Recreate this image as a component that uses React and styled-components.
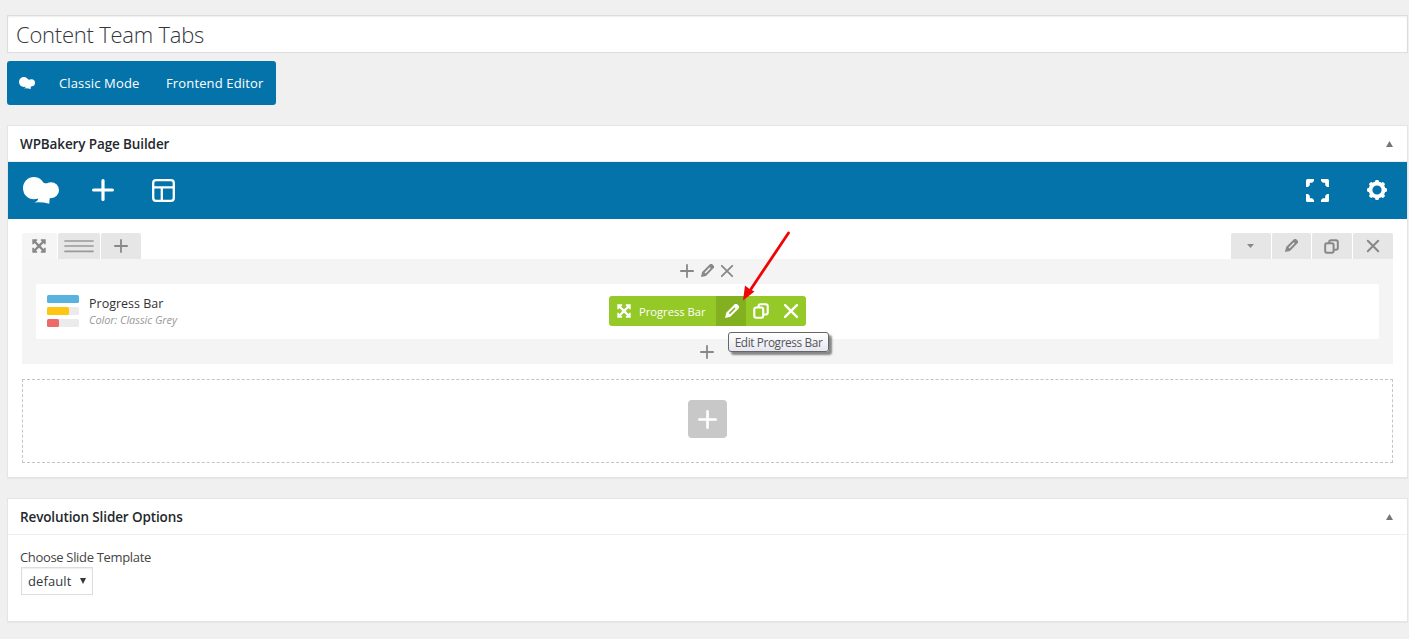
import React from "react";
import styled, { createGlobalStyle } from "styled-components";

const GlobalStyle = createGlobalStyle`
  * { box-sizing: border-box; }
  body {
    margin: 0;
    background: #f0f0f0;
    font-family: "Open Sans", "Noto Sans", sans-serif;
    font-size: 13px;
    color: #444;
  }
  svg { display: block; flex: none; }
`;

const Page = styled.main`
  display: flex;
  flex-direction: column;
  align-items: stretch;
  height: 639px;
  padding: 15px 1px 0 7px;
  overflow: hidden;
`;

const TitleField = styled.div`
  height: 38px;
  padding: 0 8px;
  border: 1px solid #ddd;
  background: #fff;
  box-shadow: inset 0 1px 2px rgba(0, 0, 0, 0.07);
  font-size: 22px;
  font-weight: 330;
  line-height: 37px;
  letter-spacing: -0.23px;
  color: #32373c;
`;

const ModeSwitch = styled.nav`
  display: flex;
  align-items: center;
  align-self: flex-start;
  width: 269px;
  height: 44px;
  margin-top: 8px;
  padding-left: 12px;
  border-radius: 3px;
  background: #0473aa;
  color: #fff;
`;

const ModeLink = styled.a`
  margin-left: ${(p) => p.$gap}px;
  width: ${(p) => p.$width}px;
  white-space: nowrap;
  font-size: 13px;
  line-height: 20px;
  letter-spacing: 0.14px;
`;

const Panel = styled.section`
  display: flex;
  flex-direction: column;
  height: ${(p) => p.$height}px;
  margin-top: 20px;
  border: 1px solid #e5e5e5;
  background: #fff;
  box-shadow: 0 1px 1px rgba(0, 0, 0, 0.04);
`;

const PanelHeader = styled.header`
  display: flex;
  align-items: center;
  justify-content: space-between;
  height: 36px;
  flex: none;
  padding: 0 14px 0 12px;
  border-bottom: 1px solid #eee;
`;

const PanelTitle = styled.h2`
  margin: 0;
  font-size: 13.5px;
  font-weight: 600;
  line-height: 20px;
  letter-spacing: -0.12px;
  color: #23282d;
`;

const Navbar = styled.div`
  display: flex;
  align-items: center;
  height: 57px;
  flex: none;
  padding: 0 20px 1px 15px;
  background: #0473aa;
  color: #fff;
`;

const NavItem = styled.div`
  display: flex;
  margin-left: ${(p) => p.$gap}px;
`;

const Spacer = styled.div`
  flex: 1;
`;

const Canvas = styled.div`
  display: flex;
  flex-direction: column;
  padding: 14px 14px 0;
`;

const RowControls = styled.div`
  display: flex;
  gap: 1px;
  height: 26px;
  color: #888;
`;

const RowTab = styled.div`
  display: flex;
  align-items: center;
  justify-content: center;
  width: ${(p) => p.$width}px;
  padding-right: 1px;
  border-radius: 2px 2px 0 0;
  background: ${(p) => (p.$plain ? "#f5f5f5" : "#e6e6e6")};
`;

const RowBody = styled.div`
  display: flex;
  flex-direction: column;
  height: 105px;
  padding: 0 14px;
  background: #f4f4f4;
  color: #888;
`;

const ColumnControls = styled.div`
  display: flex;
  align-items: center;
  justify-content: center;
  gap: 6px;
  height: 25px;
  padding: 0 1px ${(p) => p.$lift || 0}px 0;
`;

const ElementCard = styled.article`
  display: grid;
  grid-template-columns: 1fr auto 1fr;
  align-items: center;
  height: 55px;
  padding: 0 11px 1px;
  border-radius: 2px;
  background: #fff;
`;

const ElementInfo = styled.div`
  display: flex;
  align-items: center;
  gap: 10px;
`;

const ElementName = styled.h4`
  margin: 0;
  font-size: 12.5px;
  font-weight: 400;
  line-height: 17px;
  color: #333;
`;

const ElementMeta = styled.div`
  font-size: 11px;
  font-style: italic;
  line-height: 15px;
  letter-spacing: -0.08px;
  color: #999;
`;

const ElementToolbar = styled.div`
  display: flex;
  position: relative;
  width: 197px;
  height: 30px;
  border-radius: 3px;
  background: #95c927;
  color: #fff;
`;

const ToolbarLabel = styled.div`
  display: flex;
  align-items: center;
  gap: 8px;
  width: 107px;
  padding-left: 8px;
  font-size: 11.2px;
  white-space: nowrap;
`;

const ToolbarButton = styled.div`
  display: flex;
  align-items: center;
  justify-content: center;
  width: 30px;
  background: ${(p) => (p.$active ? "#82b01f" : "transparent")};
`;

const Tooltip = styled.div`
  position: absolute;
  z-index: 2;
  left: 119px;
  top: 36px;
  width: 101px;
  height: 20px;
  border: 1px solid #666;
  border-radius: 3px;
  background: linear-gradient(#fff, #e6e7f1);
  box-shadow: 3px 3px 2px rgba(0, 0, 0, 0.45);
  font-size: 11.8px;
  line-height: 18px;
  letter-spacing: -0.38px;
  text-align: center;
  white-space: nowrap;
  color: #555;
`;

const PointerArrow = styled.svg`
  position: absolute;
  z-index: 3;
  left: 131px;
  top: -67px;
  overflow: visible;
`;

const EmptyRow = styled.div`
  display: flex;
  align-items: center;
  justify-content: center;
  height: 84px;
  margin-top: 15px;
  padding-bottom: 4px;
  border: 1px dashed #c4c4c4;
`;

const AddButton = styled.div`
  display: flex;
  align-items: center;
  justify-content: center;
  width: 39px;
  height: 38px;
  border-radius: 4px;
  background: #c8c8c8;
  color: #fff;
`;

const OptionBody = styled.div`
  padding: 12px 12px;
`;

const OptionLabel = styled.div`
  font-size: 13px;
  line-height: 20px;
  letter-spacing: -0.33px;
`;

const SelectBox = styled.div`
  display: flex;
  align-items: center;
  justify-content: space-between;
  width: 72px;
  height: 28px;
  margin-left: 1px;
  padding: 0 6px;
  border: 1px solid #ddd;
  box-shadow: inset 0 1px 2px rgba(0, 0, 0, 0.07);
  font-size: 13px;
  letter-spacing: 0.1px;
  color: #32373c;
`;

const Logo = ({ width }) => (
  <svg width={width} height={width * 0.75} viewBox="0 0 36 27" fill="currentColor">
    <ellipse cx="10.9" cy="11.2" rx="10.9" ry="11.1" />
    <circle cx="28" cy="13.2" r="8" />
    <path d="M17 3.500Q20 6.200 24 6.400L27 20.500Q26.400 22 26.300 26.800Q18 24.800 11.500 25.600Q15 23.800 15.500 21.500L10 20Z" />
  </svg>
);

const Plus = ({ size, weight }) => (
  <svg width={size} height={size} viewBox={`0 0 ${size} ${size}`} stroke="currentColor" strokeWidth={weight} strokeLinecap="round">
    <path d={`M${size / 2} ${weight / 2}V${size - weight / 2}M${weight / 2} ${size / 2}H${size - weight / 2}`} />
  </svg>
);

const Cross = ({ size, weight }) => (
  <svg width={size} height={size} viewBox="0 0 14 14" stroke="currentColor" strokeWidth={weight} strokeLinecap="round">
    <path d="M1.800 1.800L12.200 12.200M12.200 1.800L1.800 12.200" />
  </svg>
);

const Pencil = ({ size = 14 }) => (
  <svg width={size} height={size} viewBox="0 0 14 14">
    <g transform="rotate(45 7 7)" fill="currentColor" fillRule="evenodd">
      <path d="M4.300 0.200Q4.300 -1.500 6 -1.500H8Q9.700 -1.500 9.700 0.200V11.200L7 15.500L4.300 11.200ZM6.300 2.400V9.800H7.700V2.400Z" />
    </g>
  </svg>
);

const Copy = ({ size = 15 }) => (
  <svg width={size} height={size} viewBox="0 0 15 15" fill="none" stroke="currentColor" strokeWidth="2">
    <rect x="1.200" y="4.200" width="8.400" height="9.600" rx="1.800" />
    <path d="M5.200 4.200V3Q5.200 1.200 7 1.200H12Q13.800 1.200 13.800 3V9Q13.800 10.800 12 10.800H9.800" />
  </svg>
);

const Move = () => (
  <svg width="14" height="14" viewBox="0 0 14 14" fill="currentColor">
    <path d="M0.300 0.300H5.200V1.600L4.100 2.500L7 5.300L9.900 2.500L8.800 1.600V0.300H13.700V5.200H12.400L11.500 4.100L8.700 7L11.500 9.900L12.400 8.800H13.700V13.700H8.800V12.400L9.900 11.500L7 8.700L4.100 11.500L5.200 12.400V13.700H0.300V8.800H1.600L2.500 9.900L5.300 7L2.500 4.100L1.600 5.200H0.300Z" />
  </svg>
);

const Layout = () => (
  <svg width="23" height="23" viewBox="0 0 23 23" fill="none" stroke="currentColor" strokeWidth="2.300">
    <rect x="1.200" y="1.200" width="20.600" height="20.600" rx="2.800" />
    <path d="M1.500 8.300H21.500M9.800 8.300V21.500" />
  </svg>
);

const Fullscreen = () => (
  <svg width="23" height="23" viewBox="0 0 23 23" fill="currentColor">
    {[0, 90, 180, 270].map((angle) => (
      <path key={angle} transform={`rotate(${angle} 11.500 11.500)`} d="M0 1.500Q0 0 1.500 0H8V2L6.200 3.800H3.800V6.200L2 8H0Z" />
    ))}
  </svg>
);

const Gear = () => (
  <svg width="20" height="20" viewBox="0 0 20 20" fill="currentColor">
    <circle cx="10" cy="10" r="6.500" fill="none" stroke="currentColor" strokeWidth="3.800" />
    {[0, 45, 90, 135, 180, 225, 270, 315].map((angle) => (
      <rect key={angle} x="8.100" y="0" width="3.800" height="4" rx="1.300" transform={`rotate(${angle} 10 10)`} />
    ))}
  </svg>
);

const Lines = () => (
  <svg width="30" height="14" viewBox="0 0 30 14" stroke="#999" strokeWidth="1.700" strokeLinecap="round">
    <path d="M1 2H29M1 7H29M1 12.300H29" />
  </svg>
);

const Triangle = ({ down, width, height, color }) => (
  <svg width={width} height={height} viewBox="0 0 8 6" preserveAspectRatio="none" fill={color}>
    <path d={down ? "M0 0H8L4 6Z" : "M4 0L8 6H0Z"} />
  </svg>
);

const ProgressIcon = () => (
  <svg width="32" height="32" viewBox="0 0 32 32">
    <rect y="0" width="32" height="8" rx="1.500" fill="#58b4df" />
    <rect y="12" width="32" height="8" rx="1.500" fill="#ebebeb" />
    <rect y="12" width="22" height="8" rx="1.500" fill="#fdc60f" />
    <rect y="24" width="32" height="8" rx="1.500" fill="#ebebeb" />
    <rect y="24" width="12" height="8" rx="1.500" fill="#ee6a6a" />
  </svg>
);

export default function App() {
  return (
    <>
      <GlobalStyle />
      <Page>
        <TitleField>Content Team Tabs</TitleField>
        <ModeSwitch>
          <Logo width={16} />
          <ModeLink $gap={24} $width={81}>Classic Mode</ModeLink>
          <ModeLink $gap={26} $width={97}>Frontend Editor</ModeLink>
        </ModeSwitch>

        <Panel $height={353}>
          <PanelHeader>
            <PanelTitle>WPBakery Page Builder</PanelTitle>
            <Triangle width={7} height={6} color="#72777c" />
          </PanelHeader>
          <Navbar>
            <Logo width={36} />
            <NavItem $gap={33}><Plus size={22} weight={3.2} /></NavItem>
            <NavItem $gap={38}><Layout /></NavItem>
            <Spacer />
            <Fullscreen />
            <NavItem $gap={38}><Gear /></NavItem>
          </Navbar>
          <Canvas>
            <RowControls>
              <RowTab $width={35} $plain><Move /></RowTab>
              <RowTab $width={42}><Lines /></RowTab>
              <RowTab $width={40}><Plus size={14} weight={1.8} /></RowTab>
              <Spacer />
              <RowTab $width={40}><Triangle down width={7} height={4} color="#888" /></RowTab>
              <RowTab $width={39}><Pencil /></RowTab>
              <RowTab $width={40}><Copy /></RowTab>
              <RowTab $width={40}><Cross size={14} weight={2} /></RowTab>
            </RowControls>
            <RowBody>
              <ColumnControls $lift={1}>
                <Plus size={14} weight={1.8} />
                <Pencil />
                <Cross size={14} weight={1.8} />
              </ColumnControls>
              <ElementCard>
                <ElementInfo>
                  <ProgressIcon />
                  <div>
                    <ElementName>Progress Bar</ElementName>
                    <ElementMeta>Color: Classic Grey</ElementMeta>
                  </div>
                </ElementInfo>
                <ElementToolbar>
                  <ToolbarLabel><Move />Progress Bar</ToolbarLabel>
                  <ToolbarButton $active><Pencil size={15} /></ToolbarButton>
                  <ToolbarButton><Copy size={16} /></ToolbarButton>
                  <ToolbarButton><Cross size={16} weight={2.1} /></ToolbarButton>
                  <Tooltip>Edit Progress Bar</Tooltip>
                  <PointerArrow width="54" height="74" viewBox="0 0 54 74">
                    <path d="M48.500 4L11 60" stroke="#f00505" strokeWidth="2.800" strokeLinecap="round" />
                    <path d="M3 71.500L5 56.500L9.500 60L14.500 62.500Z" fill="#f00505" />
                  </PointerArrow>
                </ElementToolbar>
              </ElementCard>
              <ColumnControls>
                <Plus size={14} weight={1.8} />
              </ColumnControls>
            </RowBody>
            <EmptyRow>
              <AddButton><Plus size={19} weight={2.6} /></AddButton>
            </EmptyRow>
          </Canvas>
        </Panel>

        <Panel $height={124}>
          <PanelHeader>
            <PanelTitle>Revolution Slider Options</PanelTitle>
            <Triangle width={7} height={6} color="#72777c" />
          </PanelHeader>
          <OptionBody>
            <OptionLabel>Choose Slide Template</OptionLabel>
            <SelectBox>
              default
              <Triangle down width={6} height={6} color="#32373c" />
            </SelectBox>
          </OptionBody>
        </Panel>
      </Page>
    </>
  );
}
